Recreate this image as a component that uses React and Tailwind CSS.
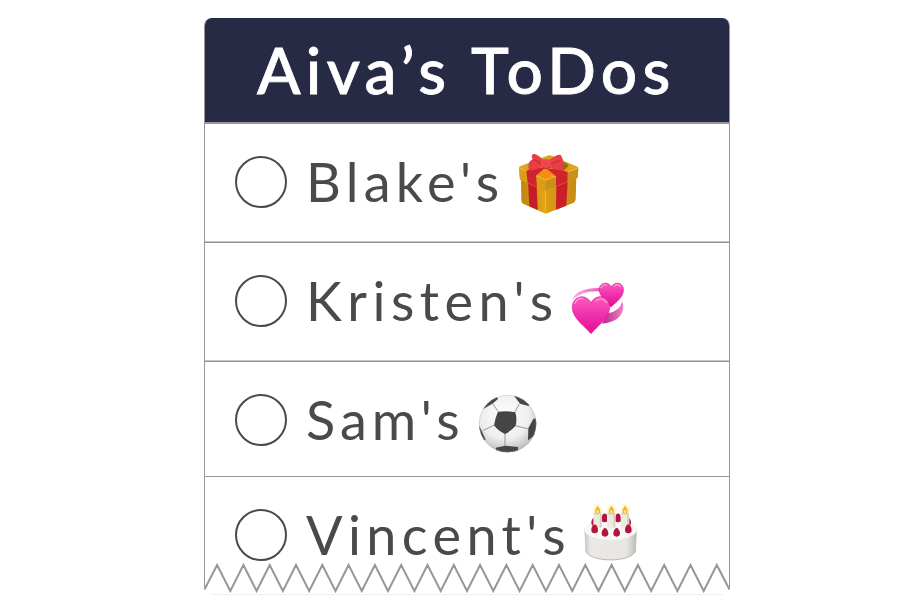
import React from "react";

function Gift() {
  return (
    <svg className="w-[80px] h-[75px] shrink-0 mt-[1px]" viewBox="0 0 240 225">
      <defs>
        <linearGradient id="gl" x1="0" x2="1"><stop offset="0" stopColor="#c08412" /><stop offset="1" stopColor="#e6a514" /></linearGradient>
        <linearGradient id="gr" x1="0" x2="1"><stop offset="0" stopColor="#dc9d14" /><stop offset="1" stopColor="#c48a12" /></linearGradient>
        <radialGradient id="gt" cx=".46" cy=".55" r=".5"><stop offset="0" stopColor="#ff8414" /><stop offset=".4" stopColor="#e59c20" /><stop offset="1" stopColor="#dba322" /></radialGradient>
      </defs>
      <path d="M33 98L107 134V206L39 176Q34 173 34 166Z" fill="url(#gl)" />
      <path d="M107 134L199 96L197 162Q197 169 191 173L107 206Z" fill="url(#gr)" />
      <path d="M54 108L80 122L83 195L58 184Z" fill="#c41d26" />
      <path d="M139 120L173 108L169 182L138 194Z" fill="#ca1f28" />
      <path d="M27 68Q27 65 32 63L112 32Q120 29 127 33L202 65Q205 67 205 70L203 98L107 137L30 104Z" fill="url(#gt)" />
      <path d="M27 68L107 105V137L30 104Z" fill="#dc9e18" />
      <path d="M107 105L205 69L203 98L107 137Z" fill="#c99118" />
      <path d="M27 68L107 105L205 69" fill="none" stroke="#f4bd35" strokeWidth="3" />
      <path d="M49 78L72 66L104 70L78 92L81 125L53 114Z" fill="#d0242c" />
      <path d="M111 72L140 70L173 81L172 110L138 124L138 94Z" fill="#d0242c" />
      <path d="M158 50Q170 53 176 62L162 76L142 74Z" fill="#847410" />
      <path d="M100 45Q77 23 68 28Q62 33 68 43Q54 50 55 66Q56 78 69 76Q89 68 99 66Z" fill="#e83f46" />
      <path d="M118 45Q143 26 152 30Q161 42 163 68Q160 78 149 76Q130 73 118 66Z" fill="#e83f46" />
      <path d="M70 44Q83 48 97 58M148 47Q134 52 122 58" fill="none" stroke="#cc2c37" strokeWidth="4" />
      <rect x="93" y="43" width="31" height="28" rx="10" fill="#ee484f" />
      <path d="M98 68Q108 74 120 68" fill="none" stroke="#c92633" strokeWidth="3" />
    </svg>
  );
}

function Hearts() {
  return (
    <svg className="w-[80px] h-[75px] shrink-0 mt-[13px]" viewBox="0 0 240 225">
      <defs>
        <linearGradient id="h1" x1="0" x2="0" y1="0" y2="1"><stop offset="0" stopColor="#fb5cbe" /><stop offset=".4" stopColor="#f436b2" /><stop offset="1" stopColor="#e30d94" /></linearGradient>
        <linearGradient id="h2" x1="0" x2="1"><stop offset="0" stopColor="#b72782" /><stop offset="1" stopColor="#f07fcb" /></linearGradient>
        <linearGradient id="h3" x1="0" x2="1"><stop offset="0" stopColor="#f9b5e1" /><stop offset="1" stopColor="#ea55b7" /></linearGradient>
      </defs>
      <path d="M38 89Q48 54 118 54L124 65Q72 59 38 89Z" fill="url(#h3)" />
      <path d="M187 93Q195 119 180 138Q164 158 126 161L143 130Q180 124 187 93Z" fill="url(#h2)" />
      <path d="M152 111C139 97 117 78 118 57C119 38 143 33 154 50C165 34 188 37 190 56C193 78 170 96 152 111Z" fill="url(#h1)" stroke="#d51d92" strokeWidth="2" />
      <path d="M123 53Q127 43 138 45M163 48Q174 40 182 50" fill="none" stroke="#ff96d9" strokeWidth="4" strokeLinecap="round" />
      <path d="M93 191C76 170 37 145 37 112C37 78 77 69 93 98C108 69 148 77 149 110C149 144 111 169 93 191Z" fill="url(#h1)" stroke="#dc1796" strokeWidth="2" />
      <path d="M44 101Q51 83 69 86M108 92Q127 79 140 98" fill="none" stroke="#ff94d8" strokeWidth="4" strokeLinecap="round" />
    </svg>
  );
}

function Ball() {
  return (
    <svg className="w-[80px] h-[75px] shrink-0 mt-[5px]" viewBox="0 0 240 225">
      <defs>
        <radialGradient id="b1" cx=".45" cy=".35" r=".65"><stop offset="0" stopColor="#fff" /><stop offset=".65" stopColor="#eee" /><stop offset="1" stopColor="#bdbdbd" /></radialGradient>
        <clipPath id="bc"><circle cx="113" cy="116" r="86" /></clipPath>
      </defs>
      <circle cx="113" cy="116" r="86" fill="url(#b1)" />
      <g clipPath="url(#bc)">
        <path d="M84 79L68 56M134 82L148 57M73 120L38 137M136 122L173 131M105 145V184" fill="none" stroke="#999" strokeWidth="3" />
        <path d="M84 80Q110 76 136 82Q142 102 137 122Q124 137 105 147Q84 138 72 121Q75 99 84 80ZM50 66L67 56L84 42L75 26L35 52L40 72ZM132 32L150 56L176 63L190 50L145 22ZM190 102L175 130L174 166L210 140L202 99ZM25 119L35 137L47 164L18 170ZM78 188L105 182L144 186L145 215H75Z" fill="#454545" />
      </g>
      <circle cx="113" cy="116" r="85" fill="none" stroke="#aaa" strokeOpacity=".55" strokeWidth="2" />
    </svg>
  );
}

function Candle({ x }) {
  return (
    <g transform={`translate(${x} 0)`}>
      <ellipse cx="0" cy="44" rx="15" ry="17" fill="#ffe98a" opacity=".35" />
      <rect x="-13" y="53" width="26" height="47" rx="5" fill="#eeece0" />
      <path d="M9 56V97" stroke="#d2d0c2" strokeWidth="5" />
      <ellipse cx="0" cy="56" rx="12" ry="4" fill="#dedac9" />
      <path d="M0 32C5 39 8 43 8 48A8 8 0 0 1-8 48C-8 43-4 39 0 32Z" fill="#f0b427" />
      <ellipse cx="0" cy="50" rx="4" ry="5" fill="#ffe978" />
    </g>
  );
}

function Berry({ x, y }) {
  return <path transform={`translate(${x} ${y})`} d="M0-14C7-10 10-4 10 3A10 10 0 0 1-10 3C-10-4-7-10 0-14Z" fill="#b5143c" />;
}

function Cake() {
  return (
    <svg className="w-[75px] h-[75px] shrink-0 mt-[-5px]" viewBox="0 0 225 225">
      <defs>
        <linearGradient id="c1" x1="0" x2="1"><stop offset="0" stopColor="#c6c4bf" /><stop offset=".12" stopColor="#eae9e6" /><stop offset=".8" stopColor="#e8e6e3" /><stop offset="1" stopColor="#bcbab5" /></linearGradient>
      </defs>
      <path d="M28 100L31 162C36 206 178 206 183 162L186 100Z" fill="url(#c1)" />
      <path d="M31 164C38 205 176 205 183 164" fill="none" stroke="#aaa79f" strokeWidth="2.5" />
      <ellipse cx="107" cy="104" rx="79" ry="31" fill="#f7f7f5" />
      <Berry x={89} y={69} /><Berry x={129} y={69} /><Berry x={59} y={80} /><Berry x={158} y={80} />
      <Candle x={68} /><Candle x={109} /><Candle x={150} />
      <Berry x={59} y={102} /><Berry x={160} y={102} /><Berry x={90} y={112} /><Berry x={125} y={112} />
    </svg>
  );
}

function Row({ label, className, textClass, children }) {
  return (
    <li className={`flex items-center pl-[30px] box-border ${className}`}>
      <span className="size-[52px] shrink-0 rounded-full border-2 border-[#4a4a4a]" />
      <span className={`ml-[19px] shrink-0 whitespace-pre text-[54px] leading-[64px] text-[#4a4a4a] ${textClass}`}>{label}</span>
      {children}
    </li>
  );
}

export default function App() {
  return (
    <main className="flex h-[602px] w-[915px] flex-col overflow-hidden bg-white pl-[204px] pt-[18px] font-['Lato',sans-serif]">
      <section className="h-[571px] w-[526px] shrink-0 rounded-t-[8px] border-x border-[#979797]">
        <h1 className="h-[106px] whitespace-nowrap rounded-t-[7px] border-b-2 border-[#979797] bg-[#262a44] pl-[52px] text-[64px] font-medium leading-[104px] tracking-[5.3px] text-white [-webkit-text-stroke:0.8px_white]">Aiva’s ToDos</h1>
        <ul>
          <Row label="Blake's" className="h-[119px] border-b border-[#8f8f8f] pb-[2px] shadow-[inset_0_-1px_0_#c6c6c6]" textClass="w-[204px] tracking-[5.3px]"><Gift /></Row>
          <Row label="Kristen's" className="h-[119px] border-b border-[#8f8f8f] pb-[2px] shadow-[inset_0_-1px_0_#c6c6c6]" textClass="w-[254px] tracking-[5.5px]"><Hearts /></Row>
          <Row label="Sam's" className="h-[115px] border-b border-[#979797] pt-[2px]" textClass="w-[164px] tracking-[5px]"><Ball /></Row>
          <Row label="Vincent's" className="h-[116px]" textClass="w-[269px] tracking-[5.4px]"><Cake /></Row>
        </ul>
      </section>
      <svg className="-mt-[27px] h-[36px] w-[526px] shrink-0" viewBox="0 0 526 36">
        <path d="M.5 26.5L13.1 2L26.3 28L39.4 2L52.6 28L65.7 2L78.9 28L92 2L105.2 28L118.3 2L131.5 28L144.6 2L157.8 28L170.9 2L184 28L197.2 2L210.4 28L223.5 2L236.7 28L249.8 2L263 28L276.1 2L289.3 28L302.4 2L315.6 28L328.7 2L341.9 28L355 2L368.2 28L381.3 2L394.5 28L407.6 2L420.8 28L433.9 2L447.1 28L460.2 2L473.4 28L486.5 2L499.7 28L512.8 2L525.5 26.5" transform="translate(0 1)" fill="none" stroke="#979797" strokeWidth="2" />
        <path d="M7 32.5H519" stroke="#f1f1f1" />
      </svg>
    </main>
  );
}
